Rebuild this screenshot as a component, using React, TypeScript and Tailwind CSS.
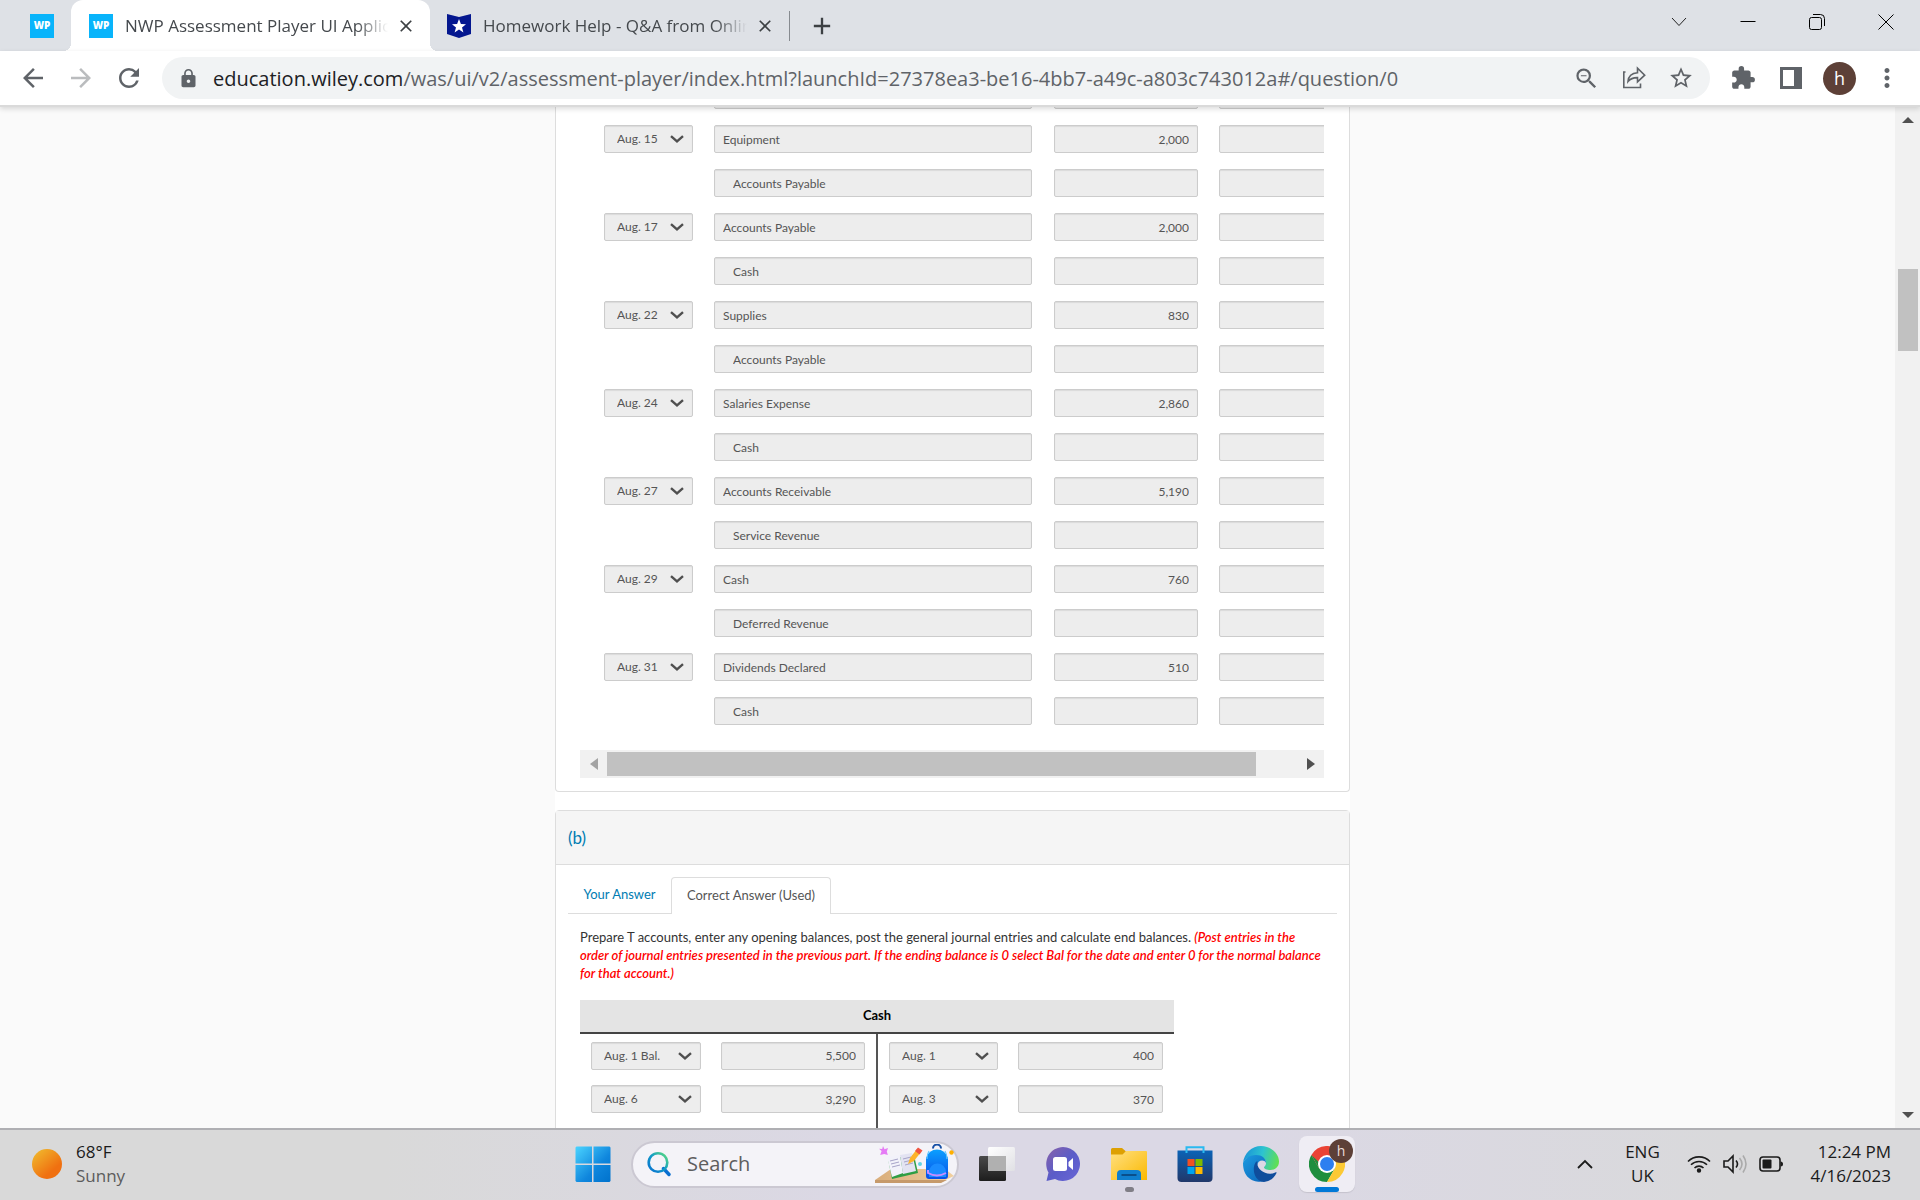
import React from "react";
import {
  MdArrowBack,
  MdArrowForward,
  MdClose,
  MdAdd,
  MdExtension,
  MdLock,
  MdMoreVert,
  MdRefresh,
  MdStarBorder,
  MdZoomOut,
} from "react-icons/md";

type Entry = { date?: string; account: string; debit?: string; indent?: boolean };

const journal: Entry[] = [
  { account: "", indent: true },
  { date: "Aug. 15", account: "Equipment", debit: "2,000" },
  { account: "Accounts Payable", indent: true },
  { date: "Aug. 17", account: "Accounts Payable", debit: "2,000" },
  { account: "Cash", indent: true },
  { date: "Aug. 22", account: "Supplies", debit: "830" },
  { account: "Accounts Payable", indent: true },
  { date: "Aug. 24", account: "Salaries Expense", debit: "2,860" },
  { account: "Cash", indent: true },
  { date: "Aug. 27", account: "Accounts Receivable", debit: "5,190" },
  { account: "Service Revenue", indent: true },
  { date: "Aug. 29", account: "Cash", debit: "760" },
  { account: "Deferred Revenue", indent: true },
  { date: "Aug. 31", account: "Dividends Declared", debit: "510" },
  { account: "Cash", indent: true },
];

const cashAccount = [
  ["Aug. 1 Bal.", "5,500", "Aug. 1", "400"],
  ["Aug. 6", "3,290", "Aug. 3", "370"],
  ["Aug. 12", "", "Aug. 17", ""],
];

function Field({ label, value = "", kind }: { label: string; value?: string; kind: "text" | "indent" | "amount" }) {
  const look = { text: "px-2", indent: "px-[18px]", amount: "px-2 text-right" }[kind];
  return (
    <input
      type="text"
      readOnly
      aria-label={label}
      value={value}
      className={`block h-7 w-full rounded-xs border border-[#ccc] bg-[#ededed] text-xs text-[#555] shadow-[inset_0_1px_1px_rgba(0,0,0,0.08)] outline-none ${look}`}
    />
  );
}

function DateSelect({ label, value }: { label: string; value: string }) {
  return (
    <div className="relative">
      <select
        aria-label={label}
        defaultValue={value}
        className="block h-7 w-full appearance-none rounded-xs border border-[#ccc] bg-[#ededed] pl-3 text-xs text-[#555] shadow-[inset_0_1px_1px_rgba(0,0,0,0.08)] outline-none"
      >
        <option>{value}</option>
      </select>
      <svg viewBox="0 0 14 8" className="pointer-events-none absolute top-2.5 right-[9px] h-2 w-3.5" aria-hidden="true">
        <path d="M1 1.2 7 6.4 13 1.2" fill="none" stroke="#4f4f4f" strokeWidth="2.4" />
      </svg>
    </div>
  );
}

function WpIcon() {
  return (
    <span className="flex size-6 shrink-0 items-center justify-center bg-[#08b4fb] font-['Open_Sans'] text-[10px] font-extrabold text-white">
      WP
    </span>
  );
}

function TabStrip() {
  return (
    <div className="flex h-[51px] items-stretch bg-[#dee1e6] font-['Open_Sans',sans-serif] text-[17px] text-[#45494d]">
      <div className="flex w-[71px] items-center justify-end rounded-br-xl pr-[17px]">
        <WpIcon />
      </div>
      <div className="relative flex w-[359px] items-center rounded-t-xl bg-white pr-3.5 pl-[18px]">
        <span className="absolute bottom-0 -left-2 size-2 bg-[radial-gradient(circle_at_0_0,transparent_8px,white_8px)]" />
        <span className="absolute -right-2 bottom-0 size-2 bg-[radial-gradient(circle_at_100%_0,transparent_8px,white_8px)]" />
        <WpIcon />
        <span className="ml-3 flex-1 overflow-hidden whitespace-nowrap [mask-image:linear-gradient(to_right,black_88%,transparent)]">
          NWP Assessment Player UI Application
        </span>
        <button aria-label="Close tab" className="ml-2 text-[#3c4043]">
          <MdClose size={20} />
        </button>
      </div>
      <div className="flex w-[359px] items-center pr-3.5 pl-[17px]">
        <svg viewBox="0 0 24 24" className="size-6 shrink-0" aria-hidden="true">
          <path d="M0 0 12 3 24 0V20L12 24 0 20Z" fill="#04178f" />
          <path d="m12 5 1.9 5 5.1.2-4 3.3 1.4 5-4.4-2.9-4.4 2.9 1.4-5-4-3.3 5.1-.2Z" fill="white" />
        </svg>
        <span className="ml-3 flex-1 overflow-hidden whitespace-nowrap [mask-image:linear-gradient(to_right,black_88%,transparent)]">
          Homework Help - Q&amp;A from Online Tutors
        </span>
        <button aria-label="Close tab" className="ml-2 text-[#3c4043]">
          <MdClose size={20} />
        </button>
      </div>
      <span className="my-auto h-[30px] w-px bg-[#878b90]" />
      <button aria-label="New tab" className="ml-4 w-8 text-[#3c4043]">
        <MdAdd size={28} className="mx-auto" />
      </button>
      <div className="ml-auto flex h-11 items-center">
        <button aria-label="Search tabs" className="flex w-[69px] justify-center">
          <svg viewBox="0 0 16 10" className="h-2.5 w-4" fill="none" stroke="#222">
            <path d="M1 1 8 8.5 15 1" />
          </svg>
        </button>
        <button aria-label="Minimize" className="flex w-[69px] justify-center">
          <svg viewBox="0 0 16 16" className="size-4" fill="none" stroke="#000">
            <path d="M.5 7.5h15" />
          </svg>
        </button>
        <button aria-label="Restore" className="flex w-[69px] justify-center">
          <svg viewBox="0 0 16 16" className="size-4" fill="none" stroke="#000">
            <rect x=".5" y="3.5" width="12" height="12" rx="2" />
            <path d="M4 .5h7.5a4 4 0 0 1 4 4V12" />
          </svg>
        </button>
        <button aria-label="Close" className="flex w-[69px] justify-center">
          <svg viewBox="0 0 16 16" className="size-4" fill="none" stroke="#000">
            <path d="M.5.5l15 15M15.500.5l-15 15" />
          </svg>
        </button>
      </div>
    </div>
  );
}

function Toolbar() {
  return (
    <div className="relative z-10 flex h-14 items-center border-b-2 border-[#dadada] bg-white text-[#5f6368] shadow-[0_2px_5px_rgba(0,0,0,0.14)]">
      <div className="flex w-[162px] items-center gap-[18px] pl-[18px]">
        <button aria-label="Back">
          <MdArrowBack size={30} />
        </button>
        <button aria-label="Forward" className="text-[#babcbe]">
          <MdArrowForward size={30} />
        </button>
        <button aria-label="Reload">
          <MdRefresh size={30} />
        </button>
      </div>
      <div className="flex h-[42px] flex-1 items-center rounded-full bg-[#f1f3f4] pr-4 pl-4">
        <MdLock size={21} className="shrink-0" />
        <div className="ml-3.5 flex-1 pt-0.5 font-['Open_Sans',sans-serif] text-xl whitespace-nowrap text-[#5f6368]">
          <span className="text-[#202124]">education.wiley.com</span>
          /was/ui/v2/assessment-player/index.html?launchId=27378ea3-be16-4bb7-a49c-a803c743012a#/question/0
        </div>
        <div className="flex items-center gap-[22px]">
          <button aria-label="Zoom">
            <MdZoomOut size={27} />
          </button>
          <button aria-label="Share">
            <svg viewBox="0 0 24 24" className="size-6" fill="none" stroke="currentColor" strokeWidth="1.6">
              <path d="M3.500 6H1.800V21.500H18.500V17.500" />
              <path d="M6 15.500c.4-5.200 3.600-8.500 9.500-8.800V2.200l7.200 7-7.200 6.700v-4.300c-4.200-.1-7.200 1.200-9.500 3.900Z" />
            </svg>
          </button>
          <button aria-label="Bookmark">
            <MdStarBorder size={26} />
          </button>
        </div>
      </div>
      <div className="flex items-center pr-[18px] pl-5">
        <button aria-label="Extensions">
          <MdExtension size={26} />
        </button>
        <button aria-label="Side panel" className="ml-6">
          <svg viewBox="0 0 22 22" className="size-[22px]">
            <path d="M0 0h22v22H0ZM3 3v16h11V3Z" fill="currentColor" fillRule="evenodd" />
          </svg>
        </button>
        <button
          aria-label="Profile"
          className="ml-[21px] flex size-[33px] items-center justify-center rounded-full bg-[#5d4037] font-['Open_Sans'] text-lg text-white"
        >
          h
        </button>
        <button aria-label="Menu" className="ml-4">
          <MdMoreVert size={30} />
        </button>
      </div>
    </div>
  );
}

function JournalCard() {
  return (
    <section className="rounded-b border border-t-0 border-[#ddd] bg-white pr-[25px] pb-[13px] pl-6">
      <div className="overflow-hidden">
        <table className="w-[804px] table-fixed border-collapse">
          <colgroup>
            <col className="w-[134px]" />
            <col className="w-[340px]" />
            <col className="w-[165px]" />
            <col className="w-[165px]" />
          </colgroup>
          <tbody>
            {journal.map((e, i) => (
              <tr key={i}>
                <td className="h-11 py-2 pr-[21px] pl-6">{e.date && <DateSelect label="Date" value={e.date} />}</td>
                <td className="py-2 pr-[22px]">
                  <Field label="Account" value={e.account} kind={e.indent ? "indent" : "text"} />
                </td>
                <td className="py-2 pr-[21px]">
                  <Field label="Debit" value={e.debit} kind="amount" />
                </td>
                <td className="py-2 pr-[21px]">
                  <Field label="Credit" kind="amount" />
                </td>
              </tr>
            ))}
          </tbody>
        </table>
      </div>
      <div className="mt-[17px] flex h-7 items-center bg-[#f1f1f1]">
        <button aria-label="Scroll left" className="flex w-[27px] justify-center">
          <svg viewBox="0 0 8 12" className="h-3 w-2">
            <path d="M8 0v12L0 6Z" fill="#a3a3a3" />
          </svg>
        </button>
        <div className="flex-1">
          <div className="h-6 w-[94%] bg-[#c1c1c1]" />
        </div>
        <button aria-label="Scroll right" className="flex w-[27px] justify-center">
          <svg viewBox="0 0 8 12" className="h-3 w-2">
            <path d="M0 0v12L8 6Z" fill="#505050" />
          </svg>
        </button>
      </div>
    </section>
  );
}

function LedgerCard() {
  return (
    <section className="mt-[18px] rounded-t border border-[#ddd] bg-white">
      <h2 className="flex h-[54px] items-center border-b border-[#ddd] bg-[#f5f5f5] px-3 text-[17px] text-[#007cb2]">
        (b)
      </h2>
      <div className="px-3 pt-3">
        <div role="tablist" className="flex h-[37px] text-[13px]">
          <button role="tab" aria-selected="false" className="w-[103px] border-b border-[#ddd] text-[#007cb2]">
            Your Answer
          </button>
          <button
            role="tab"
            aria-selected="true"
            className="w-40 rounded-t border border-b-0 border-[#ddd] text-[#555]"
          >
            Correct Answer (Used)
          </button>
          <span className="flex-1 border-b border-[#ddd]" />
        </div>
        <div className="px-3 pt-3.5">
          <p className="text-[13px] leading-[18px] text-[#333]">
            Prepare T accounts, enter any opening balances, post the general journal entries and calculate end balances.{" "}
            <em className="font-semibold text-[#f00]">
              (Post entries in the order of journal entries presented in the previous part. If the ending balance is 0
              select Bal for the date and enter 0 for the normal balance for that account.)
            </em>
          </p>
          <table className="mt-[18px] w-[594px] table-fixed border-collapse">
            <colgroup>
              <col className="w-[131px]" />
              <col className="w-[166px]" />
              <col className="w-[131px]" />
              <col className="w-[166px]" />
            </colgroup>
            <thead>
              <tr>
                <th
                  colSpan={4}
                  className="h-[33px] border-b-2 border-[#444] bg-[#e4e4e4] text-center text-[13px] font-bold text-black"
                >
                  Cash
                </th>
              </tr>
            </thead>
            <tbody>
              {cashAccount.map(([d1, v1, d2, v2]) => (
                <tr key={d1}>
                  <td className="h-11 pr-2.5 pl-[11px]">
                    <DateSelect label="Debit date" value={d1} />
                  </td>
                  <td className="border-r-2 border-[#555] pr-[11px] pl-2.5">
                    <Field label="Debit amount" value={v1} kind="amount" />
                  </td>
                  <td className="pr-2.5 pl-[11px]">
                    <DateSelect label="Credit date" value={d2} />
                  </td>
                  <td className="pr-[11px] pl-2.5">
                    <Field label="Credit amount" value={v2} kind="amount" />
                  </td>
                </tr>
              ))}
            </tbody>
          </table>
        </div>
      </div>
    </section>
  );
}

function PageScrollbar() {
  return (
    <div className="flex w-[25px] flex-col items-center bg-[#f1f1f1]">
      <button aria-label="Scroll up" className="flex h-[26px] items-center">
        <svg viewBox="0 0 12 6" className="h-1.5 w-3">
          <path d="M0 6h12L6 0Z" fill="#505050" />
        </svg>
      </button>
      <div className="flex w-full flex-1 flex-col items-center">
        <div className="h-[14%]" />
        <div className="h-[82px] w-[20px] bg-[#c1c1c1]" />
      </div>
      <button aria-label="Scroll down" className="flex h-[26px] items-center">
        <svg viewBox="0 0 12 6" className="h-1.5 w-3">
          <path d="M0 0h12L6 6Z" fill="#505050" />
        </svg>
      </button>
    </div>
  );
}

function BackToSchoolArt() {
  return (
    <svg viewBox="0 0 80 40" className="h-10 w-20" aria-hidden="true">
      <defs>
        <linearGradient id="desk" x1="0" y1="0" x2="1" y2="0">
          <stop offset="0" stopColor="#d9ad7b" />
          <stop offset="1" stopColor="#f0cf9f" />
        </linearGradient>
        <linearGradient id="bag" x1="0" y1="0" x2="0" y2="1">
          <stop offset="0" stopColor="#0aa0ff" />
          <stop offset="1" stopColor="#0a4fe8" />
        </linearGradient>
      </defs>
      <path d="M0 36 16 25H70L79 32 66 38H0Z" fill="url(#desk)" />
      <path d="M0 36H72L66 39H0Z" fill="#c69a6b" />
      <path d="m8 2 1.500 3.200L13 4l-1.200 3.500 1 3.500-3.600-1-4 1 1.400-4L4 4.800l3.200.2Z" fill="#e57bf5" />
      <path d="m13 15 26-4 4 18-26 6Z" fill="#2f9e44" />
      <path d="m12 13 13-2 3 18-11 4Z" fill="#f2f2fa" />
      <path d="m25 11 12-2 4 18-13 3Z" fill="#e3e3f2" />
      <path d="m15 17 8-2M16 20l8-2M17 23l8-2M28 15l8-2M29 18l8-2M30 21l8-2" stroke="#a7a4c8" strokeWidth="1" />
      <path d="m33 20 2-6 7-9 4 3-7 9Z" fill="#fdb32b" />
      <path d="m40 7 3-3.500 4.500 3-3 4Z" fill="#ef5442" />
      <circle cx="45" cy="20" r="2" fill="#62d3e4" />
      <circle cx="76.500" cy="8.500" r="2.200" fill="#ffb000" />
      <path d="M58 4.500a4 4 0 0 1 8 0" fill="none" stroke="#164fa5" strokeWidth="2" />
      <path d="M51 14a11.500 12 0 0 1 22 0V32q0 3-3 3H54q-3 0-3-3Z" fill="url(#bag)" />
      <path d="M54 7q-2 3-2 8M70 7q2 3 2 8" fill="none" stroke="#62c8ff" strokeWidth="1.200" />
      <path d="M54 28a8 8 0 0 1 17 0v5H54Z" fill="#1a8cff" />
      <path d="M53 26v3q9 5 18 0" fill="none" stroke="#c58cff" strokeWidth="2" />
    </svg>
  );
}

function Taskbar() {
  const tile = "flex h-14 w-14 items-center justify-center rounded-lg";
  return (
    <footer className="grid h-[72px] shrink-0 grid-cols-[1fr_auto_1fr] items-center border-t-2 border-[#afafb3] bg-[linear-gradient(to_right,#d9d9d9_20%,#dbd8e5_45%,#dbd8e5_65%,#d9d9db_90%)] font-['Open_Sans',sans-serif] text-[17px] text-[#1b1b1b]">
      <button className="flex items-center gap-3.5 pb-0.5 pl-8 text-left leading-6">
        <span className="size-[30px] rounded-full bg-[linear-gradient(140deg,#f0c030,#f07010_70%)]" />
        <span>
          <span className="block">68°F</span>
          <span className="block text-[#5c5c5c]">Sunny</span>
        </span>
      </button>

      <nav className="flex items-center gap-2.5 pb-0.5" aria-label="Taskbar">
        <button aria-label="Start" className={tile}>
          <svg viewBox="0 0 36 36" className="size-9">
            <defs>
              <linearGradient id="win" x1="0" y1="0" x2="1" y2="1">
                <stop offset="0" stopColor="#4bd4ff" />
                <stop offset=".6" stopColor="#0f86dd" />
                <stop offset="1" stopColor="#0072cc" />
              </linearGradient>
            </defs>
            <path
              d="M1.500.5H17v17H.5v-16ZM18.500.5H34.500l1 1v16H18.500ZM.5 19H17v17H1.500l-1-1ZM18.500 19h17v16l-1 1h-16Z"
              fill="url(#win)"
            />
          </svg>
        </button>
        <label className="flex h-[47px] w-[328px] items-center rounded-full border-2 border-[#cbc8d2] bg-[#f4f3f8] pr-0.5 pl-3.5">
          <svg viewBox="0 0 24 26" className="h-[26px] w-6 shrink-0" fill="none">
            <defs>
              <linearGradient id="lens" x1="1" y1="0" x2="0" y2="1">
                <stop offset="0" stopColor="#5fe07a" />
                <stop offset=".5" stopColor="#109ac8" />
                <stop offset="1" stopColor="#0a6fd0" />
              </linearGradient>
            </defs>
            <path d="m16.500 17.500 5.500 6" stroke="#0a6fd0" strokeWidth="3.400" strokeLinecap="round" />
            <circle cx="11" cy="11.500" r="9.300" stroke="url(#lens)" strokeWidth="2.600" />
          </svg>
          <input
            type="search"
            placeholder="Search"
            aria-label="Search"
            className="mx-4 min-w-0 flex-1 bg-transparent text-xl outline-none placeholder:text-[#5e5e5e]"
          />
          <BackToSchoolArt />
        </label>
        <button aria-label="Task view" className={tile}>
          <svg viewBox="0 0 36 36" className="size-9">
            <defs>
              <linearGradient id="tvd" x1="0" y1="0" x2="0" y2="1">
                <stop offset="0" stopColor="#4a4a4a" />
                <stop offset="1" stopColor="#1d1d1d" />
              </linearGradient>
              <linearGradient id="tvl" x1="0" y1="0" x2="1" y2="1">
                <stop offset="0" stopColor="#fff" />
                <stop offset="1" stopColor="#e0e0e4" />
              </linearGradient>
            </defs>
            <rect x="0" y="10" width="27" height="25" rx="1.500" fill="url(#tvd)" />
            <rect x="9" y="1" width="27" height="24" rx="1.500" fill="url(#tvl)" />
            <path d="M9 10h18v15H10.500L9 23.500Z" fill="#b0b0b0" />
          </svg>
        </button>
        <button aria-label="Chat" className={tile}>
          <svg viewBox="0 0 36 36" className="size-9">
            <defs>
              <linearGradient id="chat" x1="0" y1="0" x2="1" y2="1">
                <stop offset="0" stopColor="#8a62a8" />
                <stop offset=".5" stopColor="#5a5cc8" />
                <stop offset="1" stopColor="#6a66d6" />
              </linearGradient>
            </defs>
            <path d="M18 1a17 17 0 1 1-8 32l-8.500 2 2-8.500A17 17 0 0 1 18 1Z" fill="url(#chat)" />
            <rect x="8" y="11" width="14" height="14" rx="2.500" fill="#fff" />
            <path d="m23.500 16 4.500-4v12l-4.500-4Z" fill="#fff" />
          </svg>
        </button>
        <button aria-label="File Explorer" className={`${tile} relative`}>
          <svg viewBox="0 0 36 36" className="size-9">
            <defs>
              <linearGradient id="fold" x1="0" y1="0" x2="1" y2="1">
                <stop offset="0" stopColor="#ffe082" />
                <stop offset="1" stopColor="#fbb900" />
              </linearGradient>
            </defs>
            <path d="M0 3.500Q0 2 1.500 2H11l4 3.500H33V12H0Z" fill="#dda003" />
            <path d="M0 8.500h11.500L15 5h20q1 0 1 1v28H0Z" fill="url(#fold)" />
            <path d="M6 34v-6q0-4 4-4h16q4 0 4 4v6Z" fill="#0f7fce" />
            <path d="M10.500 29h15" stroke="#0a4f8a" strokeWidth="2" />
          </svg>
          <span className="absolute bottom-0 h-[5px] w-[9px] rounded-full bg-[#807e86]" />
        </button>
        <button aria-label="Microsoft Store" className={tile}>
          <svg viewBox="0 0 36 36" className="size-9">
            <defs>
              <linearGradient id="store" x1="0" y1="0" x2="0" y2="1">
                <stop offset="0" stopColor="#0b63b6" />
                <stop offset="1" stopColor="#21386a" />
              </linearGradient>
            </defs>
            <path d="M.5 4.500h35V32q0 4-4 4h-27q-4 0-4-4Z" fill="url(#store)" />
            <path d="M9.500 7V1.300h17V7" fill="none" stroke="#2bb9f0" strokeWidth="2" />
            <path d="M10.500 13h7v7h-7Z" fill="#f25022" />
            <path d="M18.500 13h7v7h-7Z" fill="#7fba00" />
            <path d="M10.500 21h7v7h-7Z" fill="#00a4ef" />
            <path d="M18.500 21h7v7h-7Z" fill="#ffb900" />
          </svg>
        </button>
        <button aria-label="Microsoft Edge" className={tile}>
          <svg viewBox="0 0 36 36" className="size-9">
            <defs>
              <linearGradient id="edgeTop" x1="0" y1=".4" x2="1" y2=".6">
                <stop offset="0" stopColor="#1a93d8" />
                <stop offset=".5" stopColor="#2dc3d0" />
                <stop offset="1" stopColor="#62e04f" />
              </linearGradient>
              <linearGradient id="edgeLow" x1="0" y1="0" x2="1" y2="1">
                <stop offset="0" stopColor="#1c9be0" />
                <stop offset="1" stopColor="#0b62b8" />
              </linearGradient>
            </defs>
            <path
              d="M0 17C1 7 9 0 18 0c10 0 18 7.500 18 15.500 0 5.500-4 8.500-8.500 8.500-4 0-6.500-1.500-6.500-2.500s2-1.500 2-4.500c0-4-4-7-10-7C6 10 1.500 13 0 17Z"
              fill="url(#edgeTop)"
            />
            <path
              d="M0 17C1.500 13 6 9 13 9c6 0 10 3.500 10 8-2-4-8.500-3-9 3-.4 7 5 13.500 12 13.500C18 38 0 37 0 17Z"
              fill="url(#edgeLow)"
            />
            <path d="M14.500 15C9 17 8.500 35 21 36c5-.3 10-3.500 12.500-9 .3-1-.5-1-1.200-.6C24 30.500 12.500 24 14.500 15Z" fill="#0f4d9c" />
          </svg>
        </button>
        <button aria-label="Google Chrome" className={`${tile} relative bg-[#efedf4] shadow-[0_1px_1px_#c5c3cd]`}>
          <svg viewBox="0 0 36 36" className="size-9">
            <path d="M2.400 9A18 18 0 0 1 33.600 9L18 18Z" fill="#ea4335" />
            <path d="M2.400 9A18 18 0 0 0 18 36L25.800 22.500 10.200 22.500Z" fill="#1e8e3e" />
            <path d="M33.600 9A18 18 0 0 1 18 36L25.800 22.500V9Z" fill="#fcc934" />
            <path d="M2.400 9 10.200 22.500 18 9H33.600Z" fill="#ea4335" />
            <path d="M2.400 9 10.200 22.500 14 20Z" fill="#1e8e3e" />
            <circle cx="18" cy="18" r="9" fill="#fff" />
            <circle cx="18" cy="18" r="7" fill="#2d7ff0" />
          </svg>
          <span className="absolute top-[3px] right-0.5 flex size-6 items-center justify-center rounded-full bg-[#5d4037] text-sm text-[#e8dcd8]">
            h
          </span>
          <span className="absolute bottom-0 h-[5px] w-6 rounded-full bg-[#0078d7]" />
        </button>
      </nav>

      <div className="flex items-center justify-end pr-[29px] pb-0.5 text-center leading-6">
        <button aria-label="Show hidden icons">
          <svg viewBox="0 0 16 10" className="h-2.5 w-4" fill="none" stroke="#1b1b1b" strokeWidth="1.800">
            <path d="M1 9 8 2l7 7" />
          </svg>
        </button>
        <button className="ml-7 w-[42px]">
          ENG
          <br />
          UK
        </button>
        <button aria-label="Network, volume and battery" className="ml-6 flex items-center gap-3">
          <svg viewBox="0 0 24 18" className="h-[18px] w-6" fill="none" stroke="#1b1b1b" strokeWidth="1.600">
            <path d="M1 6.500a15.500 15.500 0 0 1 22 0M4 9.800a11.300 11.300 0 0 1 16 0M7.500 13a6.400 6.400 0 0 1 9 0" />
            <circle cx="12" cy="15.500" r="1.400" fill="#1b1b1b" />
          </svg>
          <svg viewBox="0 0 24 20" className="h-5 w-6" fill="none" stroke="#1b1b1b" strokeWidth="1.600">
            <path d="M1 7h4l5-5v16l-5-5H1Z" />
            <path d="M13 6.500q3 3.500 0 7" />
            <path d="M16.500 4q5 6 0 12M20 1.500q6 8.500 0 17" stroke="#aaa" />
          </svg>
          <svg viewBox="0 0 24 16" className="h-4 w-6">
            <rect x="1" y="1" width="20" height="14" rx="3" fill="none" stroke="#1b1b1b" strokeWidth="1.600" />
            <rect x="3.500" y="3.500" width="9" height="9" rx="1" fill="#1b1b1b" />
            <path d="M21.500 5.500q2.500 0 2.500 2.500t-2.500 2.500Z" fill="#1b1b1b" />
          </svg>
        </button>
        <button className="ml-[27px] text-right whitespace-nowrap">
          12:24 PM
          <br />
          4/16/2023
        </button>
      </div>
    </footer>
  );
}

export default function App() {
  return (
    <div className="flex h-screen flex-col overflow-hidden bg-[#fafafa] font-['Lato',sans-serif]">
      <TabStrip />
      <Toolbar />
      <div className="flex min-h-0 flex-1">
        <main className="flex-1 overflow-hidden pl-2.5">
          <div className="mx-auto -mt-[34px] max-w-[795px] bg-white">
            <JournalCard />
            <LedgerCard />
          </div>
        </main>
        <PageScrollbar />
      </div>
      <Taskbar />
    </div>
  );
}
